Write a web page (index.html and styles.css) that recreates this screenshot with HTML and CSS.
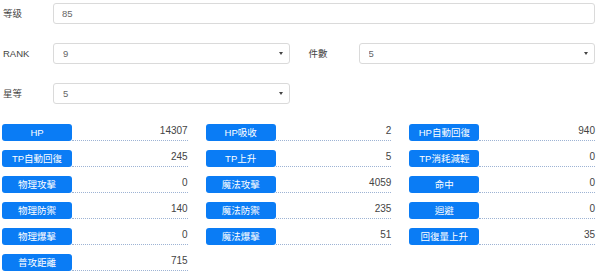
FILE: index.html
```html
<!DOCTYPE html>
<html lang="zh-Hant">
<head>
  <meta charset="UTF-8">
  <meta name="viewport" content="width=device-width, initial-scale=1.0">
  <title>角色狀態</title>
  <link rel="stylesheet" href="styles.css">
</head>
<body>

  <div class="form">
    <div class="form-row">
      <div class="half">
        <label class="field-label">等级</label>
        <input class="field-input" type="text" value="85">
      </div>
    </div>

    <div class="form-row">
      <div class="half">
        <label class="field-label">RANK</label>
        <div class="select-wrap">
          <select class="field-input">
            <option>9</option>
          </select>
        </div>
      </div>
      <div class="half">
        <label class="field-label">件數</label>
        <div class="select-wrap">
          <select class="field-input">
            <option>5</option>
          </select>
        </div>
      </div>
    </div>

    <div class="form-row">
      <div class="half">
        <label class="field-label">星等</label>
        <div class="select-wrap">
          <select class="field-input">
            <option>5</option>
          </select>
        </div>
      </div>
      <div class="half"></div>
    </div>
  </div>

  <div class="stats">
    <div class="stat"><span class="badge">HP</span><span class="value">14307</span></div>
    <div class="stat"><span class="badge">HP吸收</span><span class="value">2</span></div>
    <div class="stat"><span class="badge">HP自動回復</span><span class="value">940</span></div>

    <div class="stat"><span class="badge">TP自動回復</span><span class="value">245</span></div>
    <div class="stat"><span class="badge">TP上升</span><span class="value">5</span></div>
    <div class="stat"><span class="badge">TP消耗減輕</span><span class="value">0</span></div>

    <div class="stat"><span class="badge">物理攻擊</span><span class="value">0</span></div>
    <div class="stat"><span class="badge">魔法攻擊</span><span class="value">4059</span></div>
    <div class="stat"><span class="badge">命中</span><span class="value">0</span></div>

    <div class="stat"><span class="badge">物理防禦</span><span class="value">140</span></div>
    <div class="stat"><span class="badge">魔法防禦</span><span class="value">235</span></div>
    <div class="stat"><span class="badge">迴避</span><span class="value">0</span></div>

    <div class="stat"><span class="badge">物理爆擊</span><span class="value">0</span></div>
    <div class="stat"><span class="badge">魔法爆擊</span><span class="value">51</span></div>
    <div class="stat"><span class="badge">回復量上升</span><span class="value">35</span></div>

    <div class="stat"><span class="badge">普攻距離</span><span class="value">715</span></div>
  </div>

</body>
</html>
```

FILE: styles.css
```css
body {
  margin: 0;
  font-family: "Liberation Sans", "Noto Sans CJK TC", sans-serif;
  font-size: 10px;
  color: #333;
  background: #fff;
}

.form {
  padding: 3px 4px 0 2px;
}

.form-row {
  display: flex;
  gap: 18px;
  height: 21px;
  margin-bottom: 19px;
}

.half {
  flex: 1;
  display: flex;
}

.field-label {
  width: 50px;
  flex: none;
  padding-left: 1px;
  line-height: 21px;
  font-size: 9.5px;
  color: #444;
}

.field-input {
  flex: 1;
  box-sizing: border-box;
  height: 21px;
  margin: 0;
  padding: 0 8px;
  border: 1px solid #dadada;
  border-radius: 3px;
  font-family: inherit;
  font-size: 9.5px;
  color: #666;
  background: #fff;
  outline: none;
}

.select-wrap {
  flex: 1;
  display: flex;
  position: relative;
}

.select-wrap select {
  -webkit-appearance: none;
  appearance: none;
  width: 100%;
  padding-left: 9px;
}

.select-wrap::after {
  content: "";
  position: absolute;
  right: 7px;
  top: 9px;
  border-left: 2.5px solid transparent;
  border-right: 2.5px solid transparent;
  border-top: 3px solid #444;
}

.stats {
  display: grid;
  grid-template-columns: repeat(3, 1fr);
  column-gap: 18px;
  row-gap: 9px;
  padding: 1px 4px 0 2px;
}

.stat {
  display: flex;
  height: 17px;
}

.badge {
  width: 70px;
  flex: none;
  background: #0a7cf5;
  color: #fff;
  border-radius: 3px;
  text-align: center;
  font-size: 9.5px;
  line-height: 17px;
}

.value {
  flex: 1;
  text-align: right;
  font-size: 10px;
  line-height: 14px;
  color: #444;
  border-bottom: 1px dotted #9db3d4;
  box-sizing: border-box;
  height: 17px;
}
```
